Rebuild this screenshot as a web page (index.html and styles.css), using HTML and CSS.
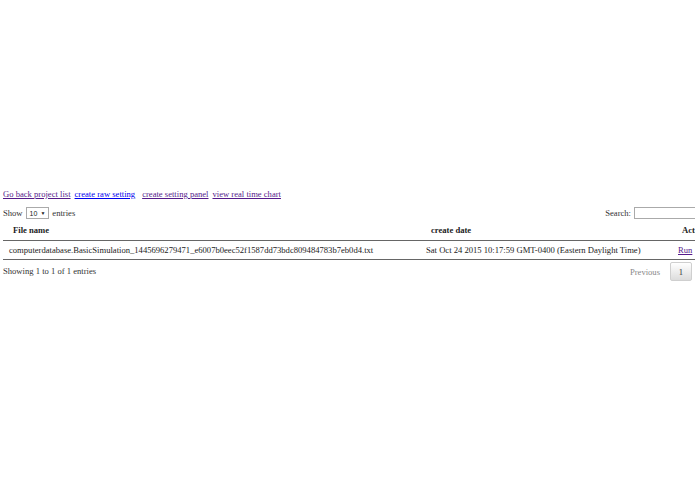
FILE: index.html
```html
<!DOCTYPE html>
<html>
<head>
<meta charset="utf-8">
<link rel="stylesheet" href="styles.css">
</head>
<body>
<div class="page">
  <div class="spacer"></div>
  <div class="links">
    <a class="visited" href="#">Go back project list</a>
    <a class="fresh" href="#">create raw setting</a>
    <a class="visited" href="#">create setting panel</a>
    <a class="visited" href="#">view real time chart</a>
  </div>
  <div class="wrapper">
    <div class="controls">
      <label class="length">Show <span class="select">10 <span class="caret">▼</span></span> entries</label>
      <label class="filter">Search: <span class="search"></span></label>
    </div>
    <table class="grid">
      <thead>
        <tr>
          <th class="c1">File name</th>
          <th class="c2">create date</th>
          <th class="c3">Action</th>
        </tr>
      </thead>
      <tbody>
        <tr>
          <td class="c1">computerdatabase.BasicSimulation_1445696279471_e6007b0eec52f1587dd73bdc809484783b7eb0d4.txt</td>
          <td class="c2">Sat Oct 24 2015 10:17:59 GMT-0400 (Eastern Daylight Time)</td>
          <td class="c3"><a class="visited" href="#">Run</a></td>
        </tr>
      </tbody>
    </table>
    <div class="footer">
      <div class="info">Showing 1 to 1 of 1 entries</div>
      <div class="pager">
        <span class="prev">Previous</span>
        <span class="btn">1</span>
      </div>
    </div>
  </div>
</div>
</body>
</html>
```
FILE: styles.css
```css
html, body {
  margin: 0;
  padding: 0;
  background: #fff;
  overflow: hidden;
}
body {
  width: 695px;
  height: 494px;
  font-family: "Liberation Serif", "Times New Roman", serif;
  font-size: 8.6px;
  color: #333;
}
.page {
  padding-left: 3px;
  width: 740px;
}
.spacer {
  height: 188px;
}
.links {
  display: flex;
  gap: 4px;
  height: 12px;
  line-height: 12px;
}
.links a {
  text-decoration: underline;
}
.links a.fresh { margin-right: 3px; }
a.visited { color: #551a8b; }
a.fresh { color: #0000ee; }
.wrapper {
  width: 737px;
  margin-top: 7px;
}
.controls {
  display: flex;
  justify-content: space-between;
  align-items: center;
  height: 12px;
}
.length {
  display: flex;
  align-items: center;
  gap: 3px;
}
.select {
  display: inline-flex;
  align-items: center;
  gap: 3px;
  height: 10px;
  padding: 0 3px;
  border: 1px solid #aaa;
  font-family: "Liberation Sans", Arial, sans-serif;
  font-size: 7px;
  color: #222;
}
.caret { font-size: 5px; }
.filter {
  display: flex;
  align-items: center;
  gap: 3px;
}
.search {
  display: inline-block;
  width: 96px;
  height: 10px;
  border: 1px solid #aaa;
  margin-right: 8px;
}
.grid {
  width: 737px;
  border-collapse: collapse;
  margin-top: 0;
  table-layout: fixed;
}
.grid th, .grid td {
  box-sizing: border-box;
}
.grid th {
  text-align: left;
  font-weight: bold;
  color: #222;
  padding: 6px 5px 5px 10px;
  border-bottom: 1px solid #666;
  line-height: 10px;
}
.grid td {
  padding: 4px 6px 4px 6px;
  border-bottom: 1px solid #666;
  line-height: 10px;
  white-space: nowrap;
  color: #222;
}
.grid th.c2 { padding-left: 11px; }
.c1 { width: 417px; }
.c2 { width: 252px; }
.c3 { width: 68px; }
.footer {
  display: flex;
  justify-content: space-between;
  align-items: center;
  margin-top: 2px;
}
.info {
  margin-top: -2px;
}
.pager {
  display: flex;
  align-items: center;
  gap: 10px;
  margin-right: 48px;
}
.prev { color: #888; }
.btn {
  box-sizing: border-box;
  width: 22px;
  height: 19px;
  display: flex;
  align-items: center;
  justify-content: center;
  border: 1px solid #cfcfcf;
  border-radius: 2px;
  background: linear-gradient(#fff, #dcdcdc);
  color: #333;
}
```
